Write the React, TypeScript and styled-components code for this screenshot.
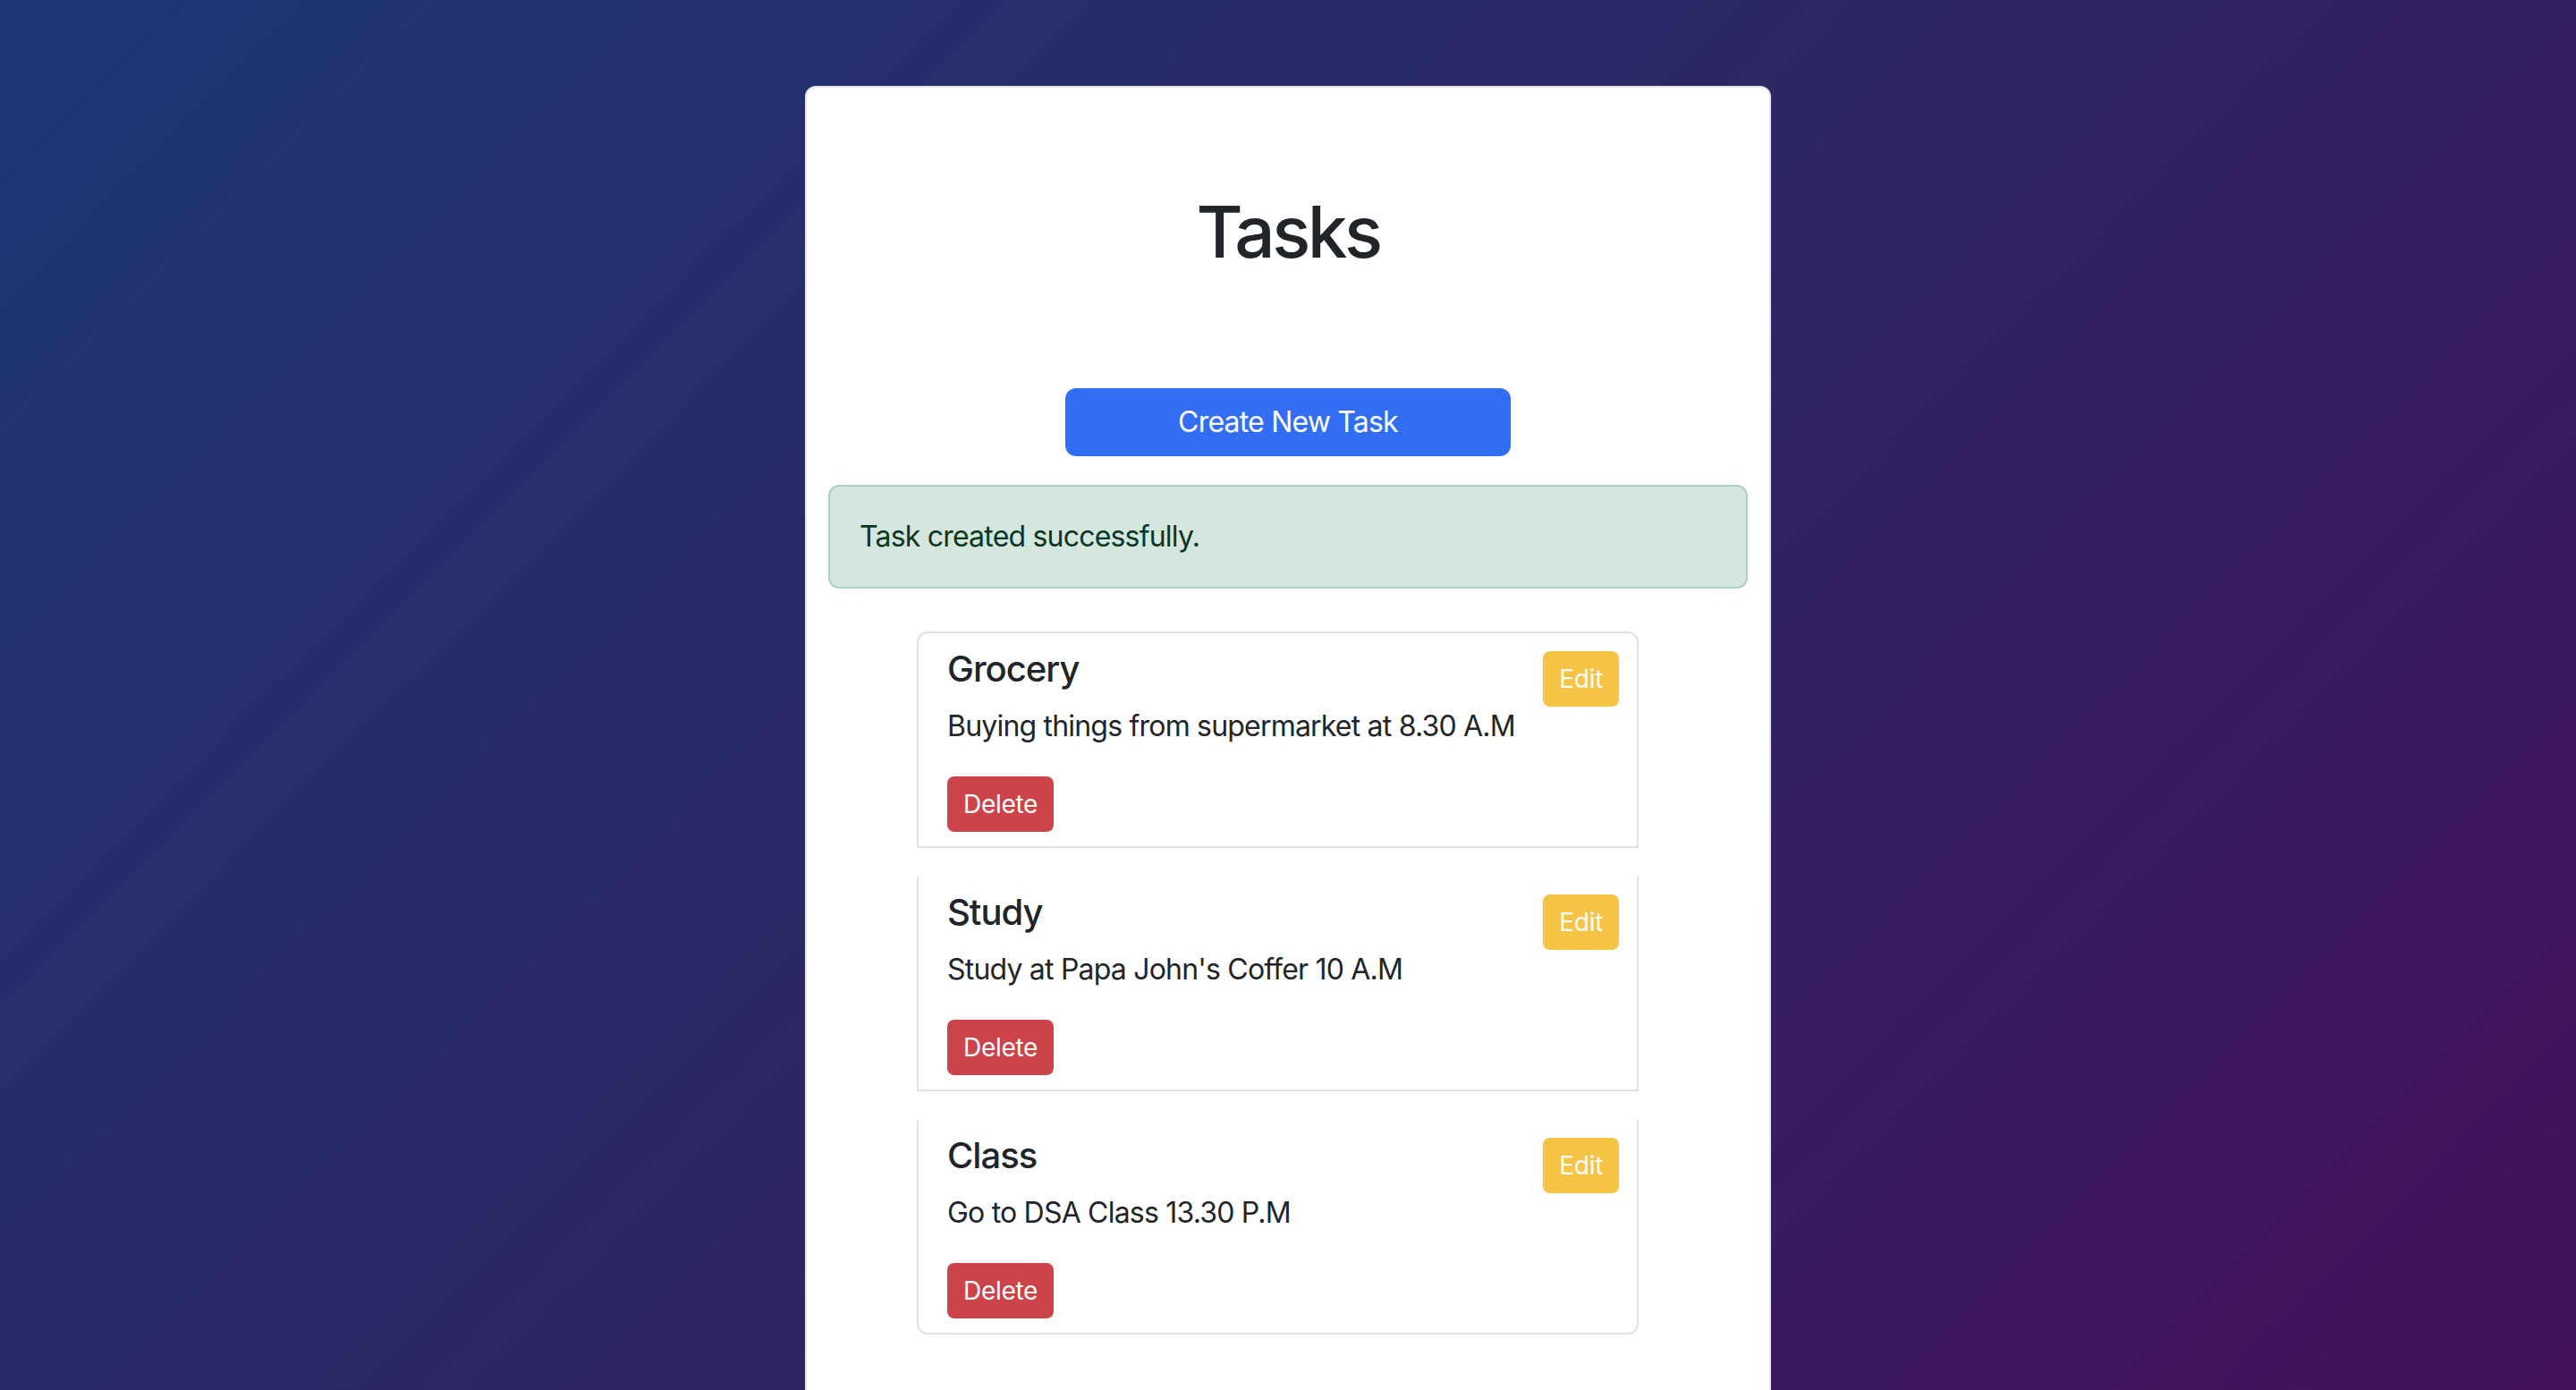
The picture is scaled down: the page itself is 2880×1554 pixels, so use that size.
import React from "react";
import styled, { createGlobalStyle, css } from "styled-components";

const GlobalStyle = createGlobalStyle`
  html, body {
    margin: 0;
    padding: 0;
  }
  body {
    font-family: Inter, "Liberation Sans", Arial, sans-serif;
    color: #212529;
    background: linear-gradient(135deg, #1d3674 0%, #2c2866 45%, #44115a 100%) fixed;
  }
  * { box-sizing: border-box; }
`;

const Page = styled.div`
  min-height: 100vh;
  padding-top: 96px;
`;

const Panel = styled.main`
  width: 1080px;
  margin: 0 auto;
  background: #ffffff;
  border: 2px solid #e3e6ea;
  border-radius: 12px;
  padding: 24px 24px 96px;
`;

const Heading = styled.h1`
  margin: 89px 0 127px;
  text-align: center;
  font-family: Inter, "Liberation Sans", sans-serif;
  font-size: 80px;
  line-height: 96px;
  font-weight: 500;
  letter-spacing: -3.5px;
  color: #212529;
`;

const ActionRow = styled.div`
  display: flex;
  justify-content: center;
`;

const CreateButton = styled.button`
  width: 498px;
  height: 76px;
  border: none;
  border-radius: 12px;
  background: #326ef3;
  color: #ffffff;
  font-family: Inter, "Liberation Sans", sans-serif;
  font-size: 32px;
  line-height: 48px;
  letter-spacing: -0.8px;
  cursor: pointer;
`;

const Alert = styled.div`
  margin-top: 32px;
  padding: 32px 33px;
  border: 2px solid #a9d0be;
  border-radius: 12px;
  background: #d4e6dd;
  color: #0a3622;
  font-family: Inter, "Liberation Sans", sans-serif;
  font-size: 32px;
  line-height: 48px;
  letter-spacing: -0.8px;
`;

const TaskList = styled.ul`
  list-style: none;
  margin: 48px 122px 0 99px;
  padding: 0;
  display: flex;
  flex-direction: column;
  gap: 32px;
`;

type Pos = "first" | "middle" | "last";

const TaskItem = styled.li<{ $pos: Pos }>`
  display: grid;
  grid-template-columns: 1fr auto;
  padding: 16px 20px 16px 32px;
  border: 2px solid #dee2e6;
  background: #ffffff;
  ${({ $pos }) =>
    $pos === "first"
      ? css`
          border-radius: 12px 12px 0 0;
        `
      : $pos === "last"
      ? css`
          border-top-width: 0;
          border-radius: 0 0 12px 12px;
        `
      : css`
          border-top-width: 0;
          border-radius: 0;
        `}
`;

const TaskBody = styled.div`
  display: flex;
  flex-direction: column;
  align-items: flex-start;
  min-width: 0;
`;

const TaskTitle = styled.h5`
  margin: 0 0 16px;
  font-family: Inter, "Liberation Sans", sans-serif;
  font-size: 40px;
  line-height: 48px;
  font-weight: 500;
  letter-spacing: -1px;
  color: #212529;
`;

const TaskDesc = styled.p`
  margin: 0 0 32px;
  font-family: Inter, "Liberation Sans", sans-serif;
  font-size: 32px;
  line-height: 48px;
  letter-spacing: -0.8px;
  white-space: nowrap;
  color: #212529;
`;

const SmallButton = styled.button<{ $variant: "warning" | "danger" }>`
  border: 2px solid transparent;
  border-radius: 8px;
  padding: 8px 16px;
  font-family: Inter, "Liberation Sans", sans-serif;
  font-size: 28px;
  line-height: 42px;
  letter-spacing: -0.3px;
  color: #ffffff;
  cursor: pointer;
  background: ${({ $variant }) => ($variant === "warning" ? "#f5c345" : "#cb444a")};
`;

const EditButton = styled(SmallButton)`
  align-self: start;
  margin-top: 4px;
`;

const tasks = [
  { title: "Grocery", desc: "Buying things from supermarket at 8.30 A.M" },
  { title: "Study", desc: "Study at Papa John's Coffer 10 A.M" },
  { title: "Class", desc: "Go to DSA Class 13.30 P.M" },
];

export default function App() {
  return (
    <>
      <GlobalStyle />
      <Page>
        <Panel>
          <Heading>Tasks</Heading>
          <ActionRow>
            <CreateButton>Create New Task</CreateButton>
          </ActionRow>
          <Alert>Task created successfully.</Alert>
          <TaskList>
            {tasks.map((t, i) => (
              <TaskItem
                key={t.title}
                $pos={i === 0 ? "first" : i === tasks.length - 1 ? "last" : "middle"}
              >
                <TaskBody>
                  <TaskTitle>{t.title}</TaskTitle>
                  <TaskDesc>{t.desc}</TaskDesc>
                  <SmallButton $variant="danger">Delete</SmallButton>
                </TaskBody>
                <EditButton $variant="warning">Edit</EditButton>
              </TaskItem>
            ))}
          </TaskList>
        </Panel>
      </Page>
    </>
  );
}
